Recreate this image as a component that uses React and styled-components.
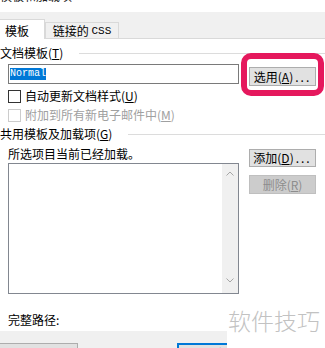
import React from "react";
import styled, { createGlobalStyle } from "styled-components";

const Global = createGlobalStyle`
  html, body { margin: 0; padding: 0; background: #fff; }
  body {
    font-family: "Noto Sans CJK SC", "Noto Sans", sans-serif;
    font-size: 12px;
    color: #000;
  }
  #root { width: 325px; height: 348px; }
`;

const Page = styled.div`
  position: relative;
  width: 325px;
  height: 348px;
  overflow: hidden;
  background: #fff;
  display: flex;
  flex-direction: column;
`;

const TitleStrip = styled.div`
  flex: none;
  height: 12px;
  overflow: hidden;
`;

const TitleText = styled.div`
  margin-top: -11px;
  line-height: 14px;
  font-size: 12px;
  color: #222;
`;

const TabBar = styled.div`
  flex: none;
  height: 26px;
  background: #f0f0f0;
  border-bottom: 1px solid #d9d9d9;
  display: flex;
  align-items: flex-end;
  padding-left: 0;
  margin-left: -11px;
`;

const Tab = styled.div`
  box-sizing: border-box;
  width: ${(p) => p.$w}px;
  height: ${(p) => (p.$active ? 20 : 16)}px;
  margin-bottom: ${(p) => (p.$active ? -1 : 0)}px;
  background: ${(p) => (p.$active ? "#fff" : "#f0f0f0")};
  border: 1px solid #d9d9d9;
  border-bottom: none;
  display: flex;
  align-items: center;
  justify-content: center;
  font-size: 12px;
  line-height: 14px;
  padding-top: ${(p) => (p.$active ? 2 : 0)}px;
`;

const Mono = styled.span`
  font-family: "Liberation Mono", monospace;
  font-size: 11px;
`;

const Body = styled.div`
  flex: none;
  display: flex;
  flex-direction: column;
  padding-top: 7px;
`;

const SectionHeader = styled.div`
  display: flex;
  align-items: center;
  gap: 16px;
  height: 14px;
  line-height: 14px;
  margin-top: ${(p) => p.$mt || 0}px;
  white-space: nowrap;
`;

const Rule = styled.div`
  flex: 1;
  height: 1px;
  background: #dcdcdc;
`;

const TemplateRow = styled.div`
  display: flex;
  align-items: flex-start;
  gap: 10px;
  margin: 4px 0 0 8px;
`;

const TextInput = styled.div`
  box-sizing: border-box;
  width: 231px;
  height: 20px;
  border: 1px solid #7a7a7a;
  padding: 0 1px;
  display: flex;
  align-items: center;
`;

const Selected = styled.span`
  background: #0078d7;
  color: #fff;
  font-family: "Liberation Mono", monospace;
  font-size: 10px;
  line-height: 12px;
  padding: 0 0 0 0;
  letter-spacing: 0;
`;

const Button = styled.div`
  box-sizing: border-box;
  width: ${(p) => p.$w || 67}px;
  height: ${(p) => p.$h || 19}px;
  margin-top: ${(p) => p.$mt || 0}px;
  margin-left: ${(p) => p.$ml || 0}px;
  flex: none;
  border: ${(p) =>
    p.$default ? "2px solid #0078d7" : p.$disabled ? "1px solid #bfbfbf" : "1px solid #adadad"};
  background: ${(p) => (p.$disabled ? "#cccccc" : "#e1e1e1")};
  color: ${(p) => (p.$disabled ? "#8d8d8d" : "#000")};
  display: flex;
  align-items: ${(p) => (p.$top ? "flex-start" : "center")};
  justify-content: center;
  padding-top: ${(p) => (p.$top ? 2 : 0)}px;
  font-size: 12px;
  line-height: 14px;
  white-space: nowrap;
`;

const Dots = styled.span`
  letter-spacing: 2px;
  margin-left: 2px;
`;

const CheckRow = styled.div`
  display: flex;
  align-items: center;
  gap: 4px;
  height: 14px;
  line-height: 14px;
  margin: ${(p) => p.$mt}px 0 0 8px;
  color: ${(p) => (p.$disabled ? "#a0a0a0" : "#000")};
  white-space: nowrap;
`;

const Box = styled.span`
  box-sizing: border-box;
  width: 13px;
  height: 13px;
  flex: none;
  border: 1px solid ${(p) => (p.$disabled ? "#cccccc" : "#333333")};
  background: #fff;
`;

const LoadedArea = styled.div`
  display: grid;
  grid-template-columns: 231px 67px;
  column-gap: 10px;
  margin: 6px 0 0 8px;
`;

const Column = styled.div`
  display: flex;
  flex-direction: column;
`;

const Label = styled.div`
  height: 14px;
  line-height: 14px;
  margin-left: ${(p) => p.$ml || 0}px;
  margin-top: ${(p) => p.$mt || 0}px;
  white-space: nowrap;
`;

const ListBox = styled.div`
  box-sizing: border-box;
  height: 131px;
  margin-top: 2px;
  border: 1px solid #828790;
  background: #fff;
  display: flex;
  justify-content: flex-end;
`;

const ScrollBar = styled.div`
  width: 16px;
  background: #f0f0f0;
  display: flex;
  flex-direction: column;
  justify-content: space-between;
  align-items: center;
  padding: 7px 0 10px;
`;

const Footer = styled.div`
  flex: 1;
  margin-top: 4px;
  background: #f0f0f0;
  display: flex;
  align-items: flex-start;
  padding-top: 12px;
`;

const Highlight = styled.div`
  position: absolute;
  left: 241px;
  top: 53px;
  width: 83px;
  height: 43px;
  box-sizing: border-box;
  border: 6px solid #e5185d;
  border-radius: 10px;
  pointer-events: none;
`;

const Watermark = styled.div`
  position: absolute;
  left: 227px;
  top: 300px;
  right: 0;
  bottom: 0;
  background: #fff;
  color: #c2c2c2;
  font-size: 23px;
  line-height: 23px;
  padding: 9px 0 0 1px;
  white-space: nowrap;
  font-weight: 300;
`;

const Chevron = ({ up }) => (
  <svg width="8" height="5" viewBox="0 0 8 5">
    <path
      d={up ? "M0.5 4.5 L4 1 L7.5 4.5" : "M0.5 0.5 L4 4 L7.5 0.5"}
      fill="none"
      stroke="#a6a6a6"
      strokeWidth="1"
    />
  </svg>
);

export default function App() {
  return (
    <>
      <Global />
      <Page>
        <TitleStrip>
          <TitleText>模板和加载项</TitleText>
        </TitleStrip>
        <TabBar>
          <Tab $active $w={56}>模板</Tab>
          <Tab $w={74}>
            链接的&nbsp;<Mono>CSS</Mono>
          </Tab>
        </TabBar>
        <Body>
          <SectionHeader>
            <span>
              文档模板(<u>T</u>)
            </span>
            <Rule />
          </SectionHeader>
          <TemplateRow>
            <TextInput>
              <Selected>Normal</Selected>
            </TextInput>
            <Button $mt={3}>
              选用(<u>A</u>)<Dots>...</Dots>
            </Button>
          </TemplateRow>
          <CheckRow $mt={3}>
            <Box />
            <span>
              自动更新文档样式(<u>U</u>)
            </span>
          </CheckRow>
          <CheckRow $mt={5} $disabled>
            <Box $disabled />
            <span>
              附加到所有新电子邮件中(<u>M</u>)
            </span>
          </CheckRow>
          <SectionHeader $mt={5}>
            <span>
              共用模板及加载项(<u>G</u>)
            </span>
            <Rule />
          </SectionHeader>
          <LoadedArea>
            <Column>
              <Label>所选项目当前已经加载。</Label>
              <ListBox>
                <ScrollBar>
                  <Chevron up />
                  <Chevron />
                </ScrollBar>
              </ListBox>
            </Column>
            <Column>
              <Button $mt={2} $h={18}>
                添加(<u>D</u>)<Dots>...</Dots>
              </Button>
              <Button $mt={8} $disabled>
                删除(<u>R</u>)
              </Button>
            </Column>
          </LoadedArea>
          <Label $ml={8} $mt={19}>
            完整路径:
          </Label>
        </Body>
        <Footer>
          <Button $w={104} $h={24} $ml={-26} $top>
            管理器(<u>O</u>)<Dots>...</Dots>
          </Button>
          <Button $w={75} $h={24} $ml={99} $default $top>
            确定
          </Button>
        </Footer>
        <Highlight />
        <Watermark>软件技巧</Watermark>
      </Page>
    </>
  );
}
